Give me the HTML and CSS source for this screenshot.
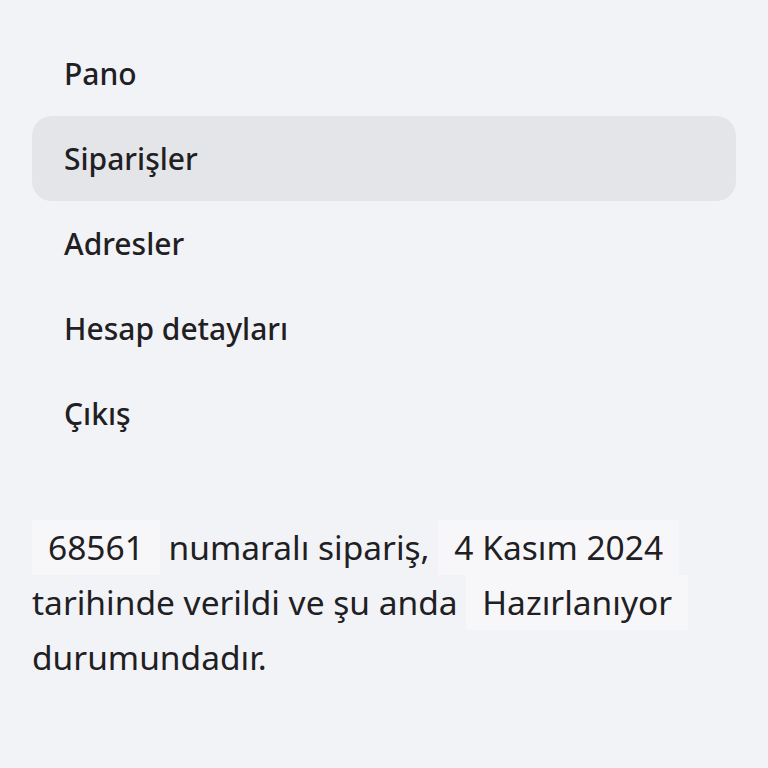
FILE: index.html
```html
<!DOCTYPE html>
<html lang="tr">
<head>
    <meta charset="UTF-8">
    <meta name="viewport" content="width=device-width, initial-scale=1.0">
    <title>Hesabım - Siparişler</title>
    <link rel="stylesheet" href="styles.css">
</head>
<body>
    <div class="account">
        <nav class="account-nav">
            <a href="#" class="nav-item">Pano</a>
            <a href="#" class="nav-item active">Siparişler</a>
            <a href="#" class="nav-item">Adresler</a>
            <a href="#" class="nav-item">Hesap detayları</a>
            <a href="#" class="nav-item">Çıkış</a>
        </nav>
        <p class="order-info">
            <mark class="tag">68561</mark> numaralı sipariş, <mark class="tag">4 Kasım 2024</mark> tarihinde verildi ve şu anda <mark class="tag">Hazırlanıyor</mark> durumundadır.
        </p>
    </div>
</body>
</html>
```

FILE: styles.css
```css
body {
    margin: 0;
    background-color: #f2f3f7;
    color: #1f2023;
    font-family: "Noto Sans", "Open Sans", sans-serif;
}
.account {
    padding: 31px 32px;
}
.account-nav {
    display: flex;
    flex-direction: column;
}
.nav-item {
    display: block;
    padding: 24px 32px;
    font-size: 30px;
    font-weight: 500;
    line-height: 37px;
    color: #1f2023;
    text-decoration: none;
    border-radius: 20px;
}
.nav-item.active {
    background-color: #e4e5e9;
}
.order-info {
    margin: 64px 0 0;
    font-size: 33.5px;
    line-height: 55px;
}
.tag {
    display: inline-block;
    padding: 0 16px;
    background-color: #f7f7f9;
    color: #1f2023;
}
```
